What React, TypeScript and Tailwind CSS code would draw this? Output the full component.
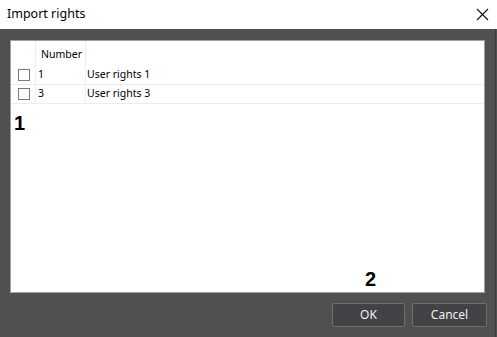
import React from "react";

const font = { fontFamily: '"Segoe UI", "Noto Sans", "Open Sans", sans-serif' };

function Check() {
  return <div className="w-[12px] h-[12px] border border-[#7a7a7a] bg-white" />;
}

export default function App() {
  const rows = [
    { n: "1", name: "User rights 1" },
    { n: "3", name: "User rights 3" },
  ];
  return (
    <div className="w-[497px] h-[337px] bg-[#505050] flex flex-col overflow-hidden" style={font}>
      <div className="h-[29px] bg-white flex items-center justify-between pl-[7px] pr-[8px] shrink-0">
        <span className="text-[12.5px] text-black leading-none">Import rights</span>
        <svg width="13" height="13" viewBox="0 0 13 13">
          <path d="M1 1 L12 12 M12 1 L1 12" stroke="#111" strokeWidth="1.1" />
        </svg>
      </div>
      <div className="flex-1 flex">
        <div className="flex-1 flex flex-col pl-[10px] pr-[10px] pt-[11px]">
          <div className="h-[253px] bg-white border border-[#a0a0a0] flex flex-col">
            <div className="flex h-[25px] text-[10.5px] text-black">
              <div className="w-[25px] border-r border-[#ececec]" />
              <div className="w-[50px] border-r border-[#ececec] pl-[5px] pt-[3px] flex items-center">Number</div>
              <div className="flex-1" />
            </div>
            {rows.map((r) => (
              <div key={r.n} className="flex h-[19px] text-[10.5px] text-black border-b border-[#ececec]">
                <div className="w-[25px] border-r border-[#f0f0f0] flex items-center pl-[7px]">
                  <Check />
                </div>
                <div className="w-[50px] border-r border-[#f0f0f0] pl-[2px] flex items-center">{r.n}</div>
                <div className="flex-1 pl-[1px] flex items-center">{r.name}</div>
              </div>
            ))}
            <div className="flex-1 relative">
              <span className="absolute left-[3px] top-[9px] text-[20px] font-bold text-black leading-none" style={{ fontFamily: '"Liberation Sans", Arial, sans-serif' }}>1</span>
              <span className="absolute left-[354px] top-[165px] text-[20px] font-bold text-black leading-none" style={{ fontFamily: '"Liberation Sans", Arial, sans-serif' }}>2</span>
            </div>
          </div>
          <div className="flex justify-end gap-[7px] mt-[10px] mr-[-2px]">
            <button className="w-[73px] h-[24px] bg-[#424247] border border-[#6e6e6e] rounded-[2px] text-[12px] text-[#f0f0f0]">OK</button>
            <button className="w-[75px] h-[24px] bg-[#424247] border border-[#6e6e6e] rounded-[2px] text-[12px] text-[#f0f0f0]">Cancel</button>
          </div>
        </div>
        <div className="w-[1px] bg-[#3a3a3a] mr-[1px]" />
      </div>
    </div>
  );
}
